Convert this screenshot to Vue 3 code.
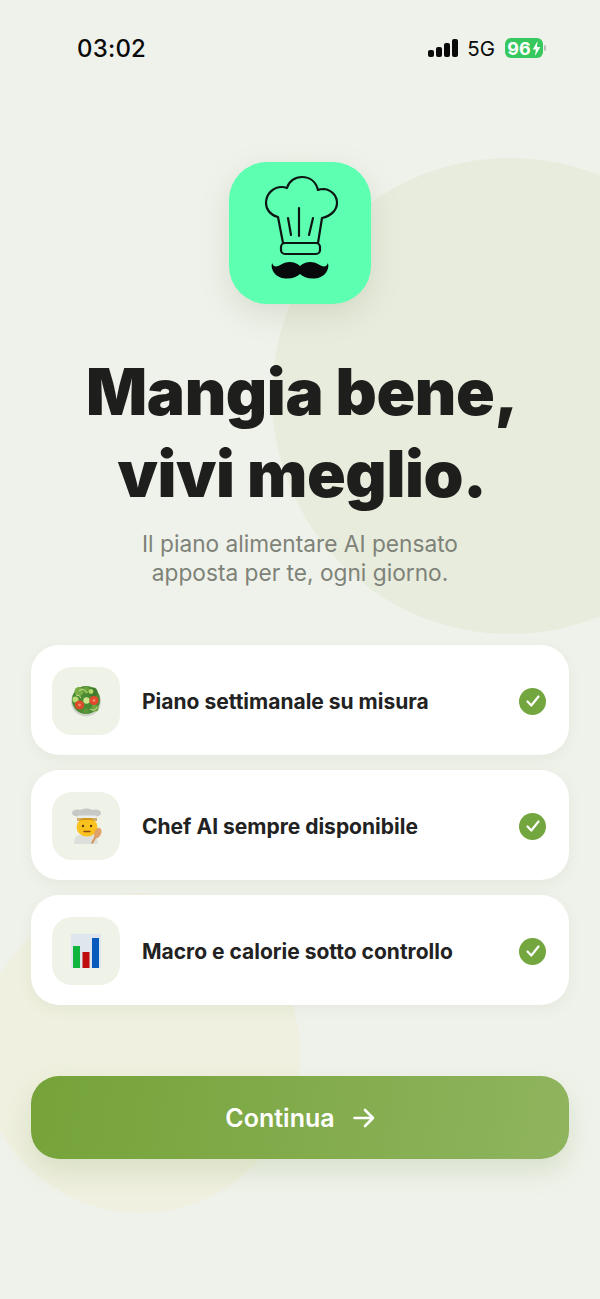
<template>
  <div class="page">
    <div class="blob blob-top"></div>
    <div class="blob blob-bottom"></div>

    <div class="status-bar">
      <span class="time">03:02</span>
      <div class="status-right">
        <svg class="signal" width="30" height="18" viewBox="0 0 30 18">
          <rect x="0" y="11" width="6" height="7" rx="2" />
          <rect x="8" y="8" width="6" height="10" rx="2" />
          <rect x="16" y="4" width="6" height="14" rx="2" />
          <rect x="24" y="0" width="6" height="18" rx="2" />
        </svg>
        <span class="network">5G</span>
        <div class="battery">
          <span>96</span>
          <svg width="9" height="15" viewBox="0 0 8 14"><path d="M5 0 L0.5 8 H3.4 L2.6 14 L7.6 5.6 H4.4 Z" fill="#fff" /></svg>
        </div>
        <div class="battery-tip"></div>
      </div>
    </div>

    <div class="app-icon">
      <svg width="142" height="142" viewBox="0 0 142 142">
        <g fill="none" stroke="#0d1512" stroke-width="2.2" stroke-linecap="round" stroke-linejoin="round">
          <path d="M49 55 C41 53 37 47 37 41 C37 32 44 25 53 25 C54.5 25 56 25.3 58 26 C60 19 66 15 73 15 C81 15 87 20 89 28 C91 27 93 27 95 27 C103 28 108 34 108 41 C108 48 102 54 93 56 L89 81 H54 Z" />
          <rect x="52" y="81" width="39" height="11" rx="4" />
          <path d="M70 46 V74 M59 56 L62 73 M84 56 L80 73" />
        </g>
        <path d="M71 104 C66 99 58 99 53 102 C50 104 47 105 45 104 C44 103 43.5 102 43 101 C41 108 47 116 56 116.5 C63 117 68 115 71 112 C74 115 79 117 86 116.5 C95 116 101 108 99 101 C98.5 102 98 103 97 104 C95 105 92 104 89 102 C84 99 76 99 71 104 Z" fill="#07090a" />
      </svg>
    </div>

    <h1 class="title">Mangia bene,<br />vivi meglio.</h1>
    <p class="subtitle">Il piano alimentare AI pensato<br />apposta per te, ogni giorno.</p>

    <div class="features">
      <div class="feature">
        <div class="feature-icon">
          <svg width="36" height="36" viewBox="0 0 36 36">
            <circle cx="18" cy="18.5" r="15" fill="#cdd2cb" />
            <circle cx="18" cy="17" r="14" fill="#4a8a33" />
            <circle cx="11" cy="8.5" r="4.5" fill="#79ad45" />
            <circle cx="25" cy="9" r="4.5" fill="#3f7a2d" />
            <circle cx="18" cy="7" r="3.5" fill="#68a03c" />
            <circle cx="27" cy="25" r="3.5" fill="#6da640" />
            <circle cx="18" cy="28" r="3" fill="#5b9537" />
            <path d="M11 8 Q16 4 19 10 M22 26 Q27 29 29 24 M8 12 Q12 12 13 15" fill="none" stroke="#c6e08a" stroke-width="1" />
            <circle cx="7.5" cy="16.5" r="3" fill="#b8dc72" />
            <circle cx="18.5" cy="17.5" r="3.2" fill="#cbe58a" />
            <circle cx="23" cy="8.5" r="2.4" fill="#b4d86c" />
            <circle cx="11.5" cy="22" r="4.6" fill="#dc4a2c" />
            <circle cx="26" cy="17.5" r="4.6" fill="#e0492e" />
            <circle cx="11.5" cy="22" r="1.4" fill="#f08a66" />
            <circle cx="26" cy="17.5" r="1.4" fill="#f08a66" />
          </svg>
        </div>
        <span class="feature-text">Piano settimanale su misura</span>
        <div class="check">
          <svg width="16" height="16" viewBox="0 0 16 16"><path d="M2.5 8.5 L6.3 12.5 L13.5 3.5" fill="none" stroke="#fff" stroke-width="2.2" stroke-linecap="round" stroke-linejoin="round" /></svg>
        </div>
      </div>

      <div class="feature">
        <div class="feature-icon">
          <svg width="36" height="36" viewBox="0 0 36 36">
            <path d="M7 30 C9 27 13 26 18 26 C23 26 27 27 29 30 L30 36 H6 Z" fill="#dcdfdb" />
            <ellipse cx="19" cy="19" rx="10.5" ry="9.5" fill="#f9c21e" />
            <path d="M9 10 H29 V13 C25 11.5 13 11.5 9 13 Z" fill="#b9791c" opacity="0.6" />
            <path d="M4 5 C4 2 9 0.5 13 2 C15 0 22 0 24 2 C28 0.5 33 2 33 5 C33 7.5 30 8.5 28 8.5 L28 10 H10 L10 8.5 C8 8.5 4 7.5 4 5 Z" fill="#c6c9c6" />
            <rect x="10" y="7.5" width="18" height="2.5" fill="#eceeea" />
            <circle cx="15" cy="18" r="1.2" fill="#5a3a12" />
            <circle cx="23" cy="18" r="1.2" fill="#5a3a12" />
            <path d="M16 23.5 H22" stroke="#8a4b12" stroke-width="1.3" stroke-linecap="round" />
            <path d="M24.3 34.7 L28 28" stroke="#d3955a" stroke-width="2" stroke-linecap="round" />
            <ellipse cx="29.7" cy="25" rx="3.5" ry="5.5" transform="rotate(22 29.7 25)" fill="#e0a26a" />
          </svg>
        </div>
        <span class="feature-text">Chef AI sempre disponibile</span>
        <div class="check">
          <svg width="16" height="16" viewBox="0 0 16 16"><path d="M2.5 8.5 L6.3 12.5 L13.5 3.5" fill="none" stroke="#fff" stroke-width="2.2" stroke-linecap="round" stroke-linejoin="round" /></svg>
        </div>
      </div>

      <div class="feature">
        <div class="feature-icon">
          <svg width="30" height="34" viewBox="0 0 30 34">
            <rect x="0" y="0" width="30" height="34" fill="#dfe6ee" />
            <rect x="2" y="12" width="7" height="22" fill="#0fb53f" />
            <rect x="11.5" y="18" width="7" height="16" fill="#c00d0d" />
            <rect x="21" y="4" width="7" height="30" fill="#0a59bd" />
          </svg>
        </div>
        <span class="feature-text">Macro e calorie sotto controllo</span>
        <div class="check">
          <svg width="16" height="16" viewBox="0 0 16 16"><path d="M2.5 8.5 L6.3 12.5 L13.5 3.5" fill="none" stroke="#fff" stroke-width="2.2" stroke-linecap="round" stroke-linejoin="round" /></svg>
        </div>
      </div>
    </div>

    <button class="continue">
      <span>Continua</span>
      <svg width="22" height="20" viewBox="0 0 22 20"><path d="M1.5 10 H20 M12 2 L20 10 L12 18" fill="none" stroke="#fff" stroke-width="2.6" stroke-linecap="round" stroke-linejoin="round" /></svg>
    </button>
  </div>
</template>

<script setup>
</script>

<style scoped>
.page {
  position: relative;
  width: 600px;
  height: 1299px;
  overflow: hidden;
  background: #eff2ea;
  font-family: Inter, "Liberation Sans", sans-serif;
  color: #1f1f1f;
}

.page > *:not(.blob) {
  position: relative;
}

.blob {
  position: absolute;
  border-radius: 50%;
}

.blob-top {
  left: 272px;
  top: 158px;
  width: 476px;
  height: 476px;
  background: #e8ecdd;
}

.blob-bottom {
  left: -20px;
  top: 893px;
  width: 320px;
  height: 320px;
  background: #eff0df;
}

.status-bar {
  display: flex;
  justify-content: space-between;
  align-items: center;
  height: 30px;
  padding: 33px 54px 0 77px;
}

.time {
  font-size: 24px;
  font-weight: 500;
  color: #0a0a0a;
  letter-spacing: 0.2px;
}

.status-right {
  display: flex;
  align-items: center;
}

.signal rect {
  fill: #0a0a0a;
}

.network {
  margin-left: 9px;
  font-size: 20.5px;
  font-weight: 400;
  color: #0a0a0a;
}

.battery {
  display: flex;
  align-items: center;
  justify-content: center;
  gap: 1px;
  width: 38px;
  height: 20px;
  margin-left: 10px;
  border-radius: 6px;
  background: #37c75f;
  color: #fff;
  font-size: 18px;
  font-weight: 700;
}

.battery-tip {
  width: 2px;
  height: 6px;
  margin-left: 1px;
  border-radius: 0 2px 2px 0;
  background: #b9bcb5;
}

.app-icon {
  width: 142px;
  height: 142px;
  margin: 99px auto 0;
  border-radius: 38px;
  background: #5dffb1;
  box-shadow: 0 10px 30px rgba(110, 130, 90, 0.18);
}

.app-icon svg {
  display: block;
}

.title {
  margin: 47px 0 0;
  padding-left: 4px;
  text-align: center;
  font-size: 64px;
  font-weight: 900;
  line-height: 82px;
  letter-spacing: -0.4px;
  color: #1e1e1c;
}

.subtitle {
  margin: 14px 0 0;
  text-align: center;
  font-size: 22.7px;
  font-weight: 400;
  line-height: 29px;
  color: #7e8279;
}

.features {
  display: flex;
  flex-direction: column;
  gap: 15px;
  margin: 58px 31px 0;
}

.feature {
  display: flex;
  align-items: center;
  height: 110px;
  padding: 2px 23px 0 21px;
  border-radius: 28px;
  background: #fff;
  box-shadow: 0 4px 14px rgba(110, 130, 90, 0.08);
  box-sizing: border-box;
}

.feature-icon {
  display: flex;
  align-items: center;
  justify-content: center;
  flex: none;
  width: 68px;
  height: 68px;
  border-radius: 20px;
  background: #eff2e7;
}

.feature-text {
  flex: 1;
  margin-left: 22px;
  font-size: 21px;
  font-weight: 700;
  color: #222;
}

.check {
  display: flex;
  align-items: center;
  justify-content: center;
  flex: none;
  width: 27px;
  height: 27px;
  border-radius: 50%;
  background: #73a63f;
}

.continue {
  display: flex;
  align-items: center;
  justify-content: center;
  gap: 18px;
  width: 538px;
  height: 83px;
  margin: 71px 31px 0;
  border: none;
  border-radius: 28px;
  background: linear-gradient(100deg, #75a339, #8fb45e);
  box-shadow: 0 12px 26px rgba(115, 150, 70, 0.18);
  color: #fff;
  font-family: inherit;
  font-size: 25px;
  font-weight: 600;
}
</style>
